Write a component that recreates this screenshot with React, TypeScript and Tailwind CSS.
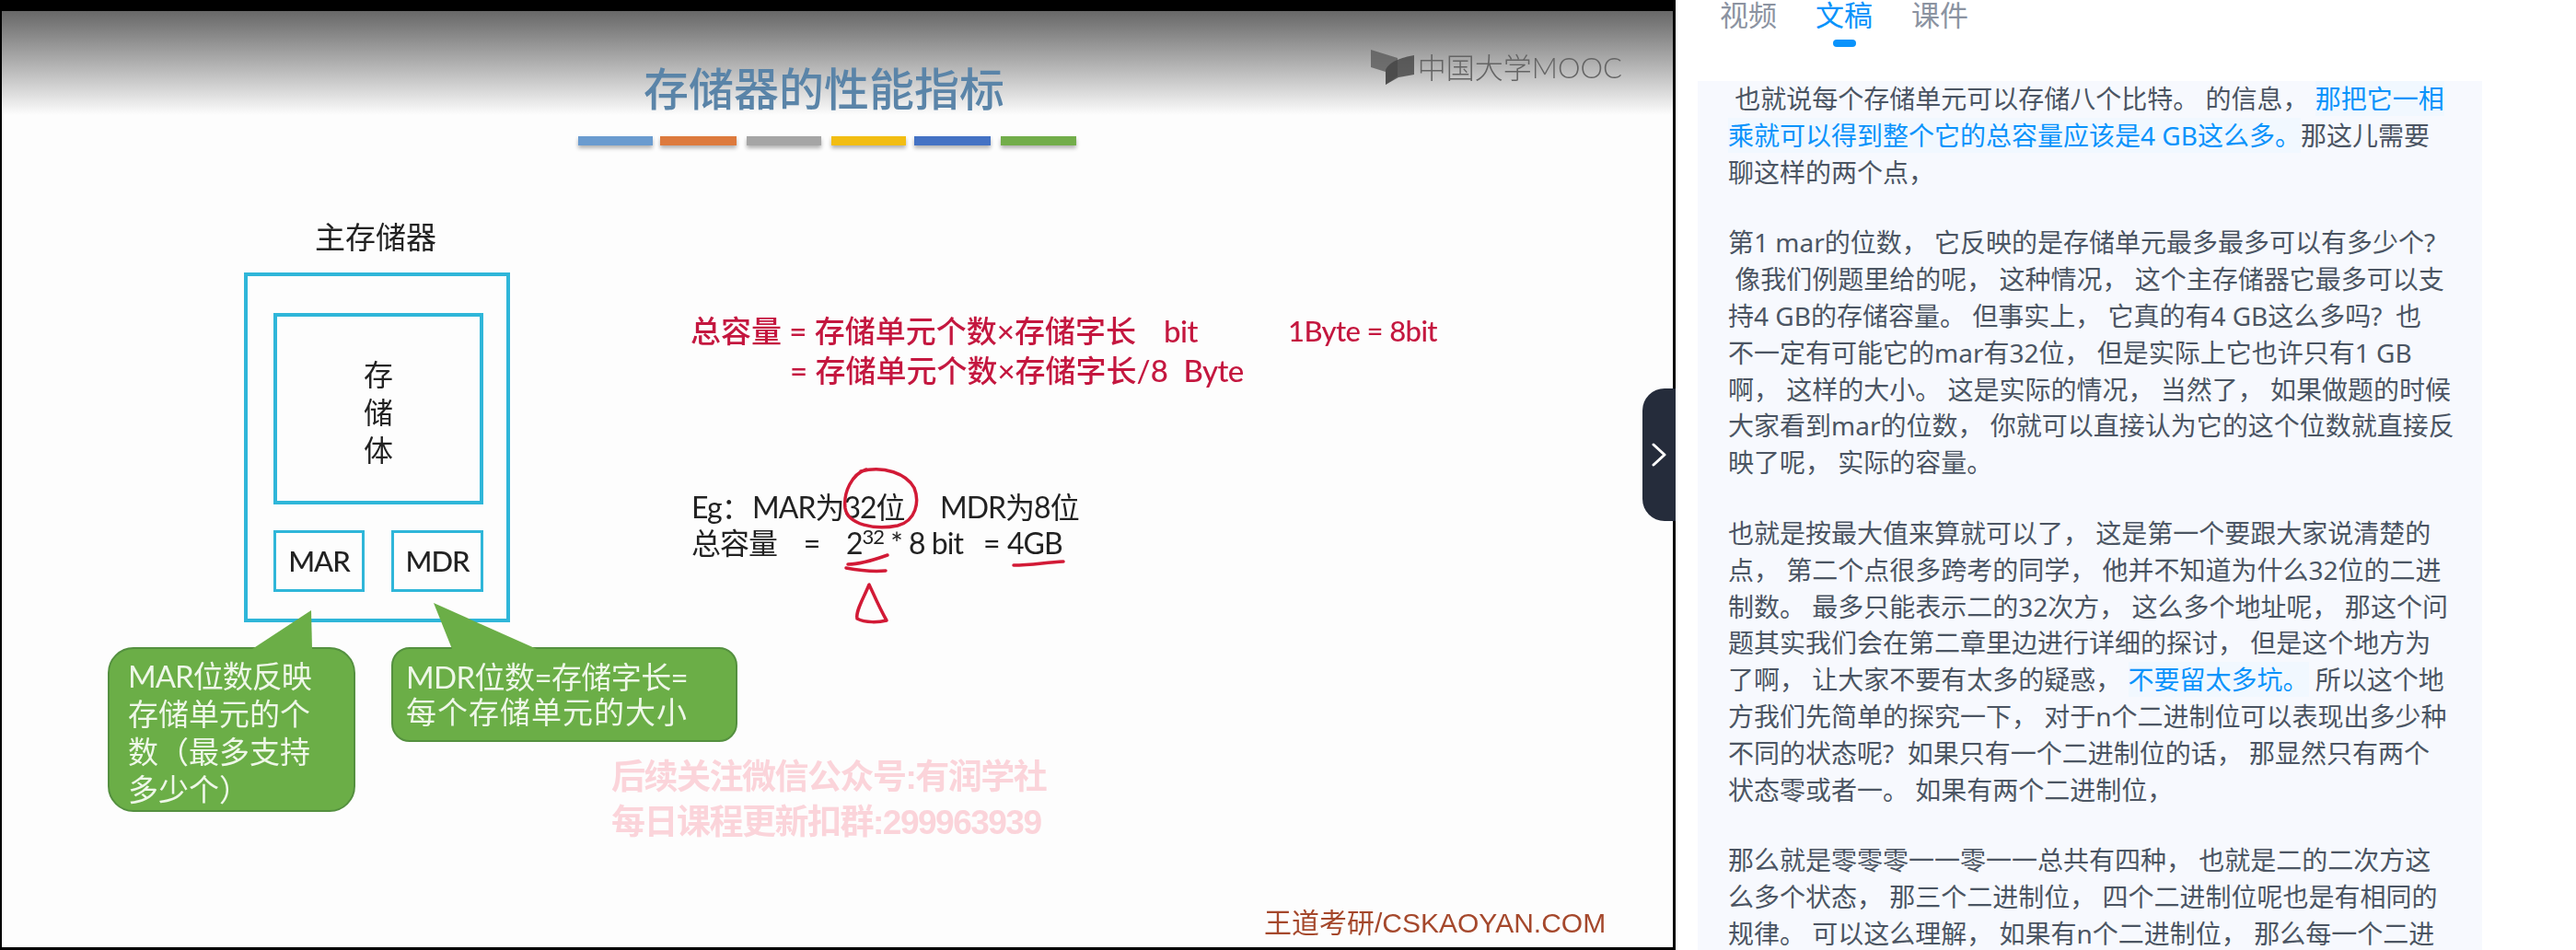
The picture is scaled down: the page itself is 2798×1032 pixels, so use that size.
import React from "react";

const slideFont = { fontFamily: 'Lato, "Noto Sans CJK SC", sans-serif' };
const panelFont = { fontFamily: '"Noto Sans", "Noto Sans CJK SC", sans-serif' };

type Seg = string | { h: string };
const paragraphs: Seg[][][] = [
  [
    ["\u00a0也就说每个存储单元可以存储八个比特。 的信息，\u00a0", { h: "那把它一相" }],
    [{ h: "乘就可以得到整个它的总容量应该是4 GB这么多。" }, "那这儿需要"],
    ["聊这样的两个点，"],
  ],
  [
    ["第1 mar的位数，\u00a0它反映的是存储单元最多最多可以有多少个?"],
    ["\u00a0像我们例题里给的呢，\u00a0这种情况，\u00a0这个主存储器它最多可以支"],
    ["持4 GB的存储容量。\u00a0但事实上，\u00a0它真的有4 GB这么多吗?\u00a0\u00a0也"],
    ["不一定有可能它的mar有32位，\u00a0但是实际上它也许只有1 GB"],
    ["啊，\u00a0这样的大小。\u00a0这是实际的情况，\u00a0当然了，\u00a0如果做题的时候"],
    ["大家看到mar的位数，\u00a0你就可以直接认为它的这个位数就直接反"],
    ["映了呢，\u00a0实际的容量。"],
  ],
  [
    ["也就是按最大值来算就可以了，\u00a0这是第一个要跟大家说清楚的"],
    ["点，\u00a0第二个点很多跨考的同学，\u00a0他并不知道为什么32位的二进"],
    ["制数。\u00a0最多只能表示二的32次方，\u00a0这么多个地址呢，\u00a0那这个问"],
    ["题其实我们会在第二章里边进行详细的探讨，\u00a0但是这个地方为"],
    ["了啊，\u00a0让大家不要有太多的疑惑，\u00a0", { h: "不要留太多坑。" }, "\u00a0所以这个地"],
    ["方我们先简单的探究一下，\u00a0对于n个二进制位可以表现出多少种"],
    ["不同的状态呢?\u00a0\u00a0如果只有一个二进制位的话，\u00a0那显然只有两个"],
    ["状态零或者一。\u00a0如果有两个二进制位，"],
  ],
  [
    ["那么就是零零零一一零一一总共有四种，\u00a0也就是二的二次方这"],
    ["么多个状态，\u00a0那三个二进制位，\u00a0四个二进制位呢也是有相同的"],
    ["规律。\u00a0可以这么理解，\u00a0如果有n个二进制位，\u00a0那么每一个二进"],
  ],
];

const bars = [
  "w-[81px] mr-[8px] bg-[#6a9bcf]",
  "w-[83px] mr-[11px] bg-[#dd7a3d]",
  "w-[81px] mr-[11px] bg-[#a5a5a5]",
  "w-[81px] mr-[9px] bg-[#f2bd12]",
  "w-[83px] mr-[11px] bg-[#4472c4]",
  "w-[82px] bg-[#72ad4a]",
];

function Slide() {
  return (
    <div className="relative flex-1 bg-[#fdfdfd] overflow-hidden blur-[0.6px]" style={slideFont}>
      <header className="flex h-[113px] items-start bg-gradient-to-b from-[#686868] to-[#fdfdfd]">
        <h1 className="ml-[697px] mt-[56px] text-[49px] leading-[56px] font-medium text-[#5a84a8] whitespace-nowrap">
          存储器的性能指标
        </h1>
        <div className="ml-auto mr-[55px] mt-[42px] flex items-center gap-[3px] text-[#646464]">
          <svg width="48" height="39" viewBox="0 0 48 39">
            <path d="M0 0 L29 9 L29 29 L16 38 L16 24 L0 19 Z" fill="#555" fillOpacity="0.75" />
            <path d="M16 38 L16 22 Q20 11 47 6 L47 27 L30 30 Z" fill="#444" fillOpacity="0.8" />
          </svg>
          <span className="text-[31px] leading-[39px] font-light whitespace-nowrap">中国大学MOOC</span>
        </div>
      </header>
      <div className="mt-[23px] ml-[626px] flex h-[10px]">
        {bars.map((b) => (
          <div key={b} className={`${b} shadow-[0_3px_4px_rgba(0,0,0,0.3)]`} />
        ))}
      </div>
      <div className="mt-[84px] ml-[115px] flex items-start">
        <div className="w-[636px]">
          <div className="ml-[225px] text-[33px] leading-[30px] text-[#222] whitespace-nowrap">主存储器</div>
          <div className="ml-[148px] mt-[24px] h-[380px] w-[289px] border-[4px] border-[#2fb6d9] pl-[28px] pt-[40px]">
            <div className="flex h-[208px] w-[228px] flex-col items-center border-[4px] border-[#2fb6d9] pt-[42px] text-[32px] leading-[41px] text-[#222]">
              <span>存</span>
              <span>储</span>
              <span>体</span>
            </div>
            <div className="mt-[28px] flex gap-[29px] text-[31px] tracking-[-1px] font-medium text-[#222]">
              <div className="flex h-[67px] w-[99px] items-center justify-center border-[3px] border-[#2fb6d9]">MAR</div>
              <div className="flex h-[67px] w-[100px] items-center justify-center border-[3px] border-[#2fb6d9]">MDR</div>
            </div>
          </div>
          <div className="mt-[27px] flex items-start gap-[39px] text-[#eef7e8]">
            <div className="relative h-[179px] w-[269px] shrink-0 rounded-[28px] border-2 border-[#54903f] bg-[#6bae47] pl-[20px] pt-[9px] text-[33px] leading-[41px]">
              <svg className="absolute left-[150px] top-[-44px]" width="70" height="46" viewBox="0 0 70 46">
                <path d="M5 44 L69 2 L70 44 Z" fill="#6bae47" />
              </svg>
              <div className="whitespace-nowrap tracking-[-1px]">MAR位数反映</div>
              <div className="whitespace-nowrap">存储单元的个</div>
              <div className="whitespace-nowrap">数（最多支持</div>
              <div className="whitespace-nowrap">多少个）</div>
            </div>
            <div className="relative h-[103px] w-[376px] shrink-0 rounded-[20px] border-2 border-[#54903f] bg-[#6bae47] pl-[14px] pt-[11px] text-[33px] leading-[38px] whitespace-nowrap">
              <svg className="absolute left-[42px] top-[-50px]" width="115" height="52" viewBox="0 0 115 52">
                <path d="M2 0 L22 50 L114 50 Z" fill="#6bae47" />
              </svg>
              <div className="tracking-[-0.6px]">MDR位数=存储字长=</div>
              <div className="tracking-[1px]">每个存储单元的大小</div>
            </div>
          </div>
        </div>
        <div className="-ml-[3px] mt-[96px] text-[33px] font-medium whitespace-nowrap">
          <div className="text-[#c4173f] leading-[43px]">
            <div className="flex">
              <span className="w-[514px]">总容量 = 存储单元个数×存储字长</span>
              <span className="w-[135px] tracking-[-0.5px]">bit</span>
              <span className="text-[31px] tracking-[-0.6px]">1Byte = 8bit</span>
            </div>
            <div className="pl-[108px]">
              = 存储单元个数×存储字长/8&nbsp;&nbsp;<span className="tracking-[-0.6px]">Byte</span>
            </div>
          </div>
          <div className="mt-[107px] pl-[1px] text-[32px] tracking-[-1px] font-normal text-[#222] leading-[39px]">
            <div className="flex">
              <span className="w-[66px]">Eg：</span>
              <span className="w-[204px]">MAR为32位</span>
              <span>MDR为8位</span>
            </div>
            <div className="flex">
              <span className="w-[168px]">总容量&nbsp;&nbsp;&nbsp;&nbsp;=</span>
              <span className="w-[149px]">
                2<sup className="text-[22px]">32</sup> * 8 bit
              </span>
              <span className="w-[26px]">=</span>
              <span>4GB</span>
            </div>
          </div>
        </div>
      </div>
      <div className="absolute left-[662px] top-[808px] text-[37px] tracking-[-1.5px] leading-[49px] font-bold text-[#fbd4da] whitespace-nowrap" style={{ fontFamily: '"Liberation Sans", "Noto Sans CJK SC", sans-serif' }}>
        <div>后续关注微信公众号:有润学社</div>
        <div>每日课程更新扣群:299963939</div>
      </div>
      <div className="absolute left-[1371px] top-[973px] text-[30px] leading-[36px] text-[#a5482c] whitespace-nowrap" style={{ fontFamily: '"Liberation Sans", "Noto Sans CJK SC", sans-serif' }}>
        王道考研/CSKAOYAN.COM
      </div>
      <svg className="absolute left-0 top-0" width="1815" height="1016" viewBox="2 12 1815 1016" fill="none" stroke="#d21a36" strokeWidth="3.5" strokeLinecap="round" strokeLinejoin="round">
        <path d="M941 510 C925 515 916 535 918 552 C921 570 950 576 975 571 C995 566 999 545 993 530 C985 515 960 505 935 512" />
        <path d="M921 613 C935 613 950 608 964 603" />
        <path d="M919 617 C935 620 950 621 962 620" />
        <path d="M1101 614 C1120 614 1135 611 1155 610" />
        <path d="M944 635 C938 650 929 664 931 672 C940 677 955 676 963 674 C956 662 950 648 944 635 Z" />
      </svg>
    </div>
  );
}

function Transcript() {
  return (
    <aside className="flex-1 bg-white" style={panelFont}>
      <nav className="flex h-[88px] items-start pl-[48px] pt-[1px] text-[31px] leading-[31px] text-[#8b93a1]">
        <span className="mr-[42px]">视频</span>
        <span className="mr-[42px] flex flex-col items-center text-[#0a93fb]">
          文稿
          <span className="mt-[11px] h-[8px] w-[25px] rounded-[4px] bg-[#0a93fb]" />
        </span>
        <span>课件</span>
      </nav>
      <div className="ml-[24px] h-[944px] w-[852px] overflow-hidden bg-[#f7f9fe] pl-[33px] text-[28px] leading-[39.8px] text-[#4b5563]">
        {paragraphs.map((p, i) => (
          <div key={i} className="mb-[37px]">
            {p.map((line, j) => (
              <div key={j} className="whitespace-nowrap">
                {line.map((s, k) =>
                  typeof s === "string" ? (
                    <span key={k}>{s}</span>
                  ) : (
                    <span key={k} className="bg-[#f1f8ff] text-[#0a93fb]">
                      {s.h}
                    </span>
                  ),
                )}
              </div>
            ))}
          </div>
        ))}
      </div>
    </aside>
  );
}

export default function App() {
  return (
    <div className="flex h-[1032px] w-[2798px] overflow-hidden bg-white">
      <section className="relative flex h-[1032px] w-[1820px] shrink-0 bg-black pb-[3px] pl-[2px] pr-[3px] pt-[12px]">
        <Slide />
        <button className="absolute right-0 top-[422px] flex h-[144px] w-[36px] items-center justify-center rounded-l-[24px] bg-[#252c3b] text-white">
          <svg width="16" height="26" viewBox="0 0 16 26" fill="none" stroke="currentColor" strokeWidth="3" strokeLinecap="round" strokeLinejoin="round">
            <path d="M2 2 L14 13 L2 24" />
          </svg>
        </button>
      </section>
      <Transcript />
    </div>
  );
}
